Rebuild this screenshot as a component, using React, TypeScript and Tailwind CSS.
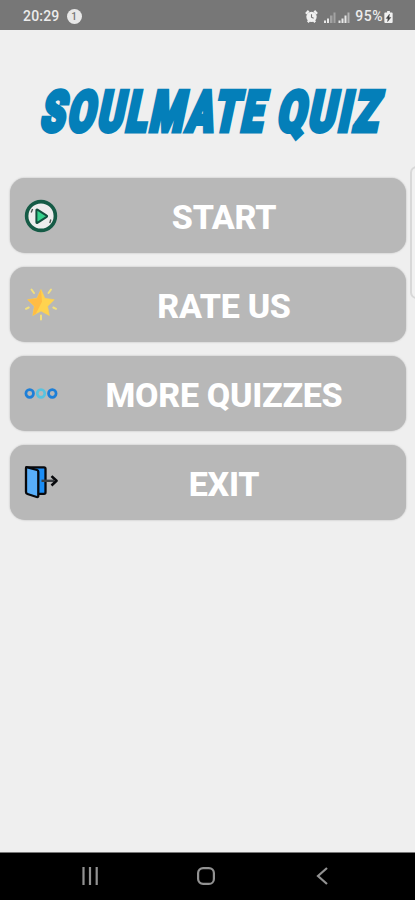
import React from "react";

const PlayIcon: React.FC = () => (
  <svg viewBox="0 0 34 34" className="size-[34px] shrink-0">
    <circle cx="17" cy="17" r="14.4" fill="#ededed" stroke="#155b46" strokeWidth="3.6" />
    <path d="M7.2 13.500l1.400-3.500M26.800 20.500l-1 3.600" stroke="#4b5551" strokeWidth="1.400" fill="none" />
    <path
      d="M12.400 11.300v12c0 .6.5.9 1 .6l9.300-6c.5-.3.5-.9 0-1.200l-9.300-6c-.5-.3-1 0-1 .6z"
      fill="#36d28d"
      stroke="#12503e"
      strokeWidth="2"
      strokeLinejoin="round"
    />
  </svg>
);

const StarIcon: React.FC = () => (
  <svg viewBox="0 2 34 34" className="size-[34px] shrink-0">
    <path
      d="M17 3.500l3.900 8.800 9.300 1.400-6.600 6.500 1.700 9.300-8.300-4.500-8.200 4.500 1.600-9.300-6.700-6.500 9.300-1.400z"
      fill="#ffd34e"
      stroke="#ffd34e"
      strokeWidth=".6"
      strokeLinejoin="round"
    />
    <path d="M17 3.500l-4 8.800-9.300 1.400 6.700 6.500-1.600 9.300 3-1.700 6.200-12z" fill="#ffbc45" />
    <g stroke="#f3e07c" strokeWidth="2" strokeLinecap="round">
      <path d="M7.500 3.500l2.500 3.500M27 3.500l-2.500 3.500M2 22.800l2.700-1.300M32 22.800l-2.700-1.300M17 29.500v4" />
    </g>
  </svg>
);

const DotsIcon: React.FC = () => (
  <svg viewBox="0 0 34 34" className="size-[34px] shrink-0" fill="none" strokeWidth="2.700">
    <circle cx="5.700" cy="16.500" r="3.800" stroke="#1d7fd8" />
    <circle cx="17" cy="16.500" r="3.800" stroke="#58c3df" />
    <circle cx="28.300" cy="16.500" r="3.800" stroke="#1d7fd8" />
  </svg>
);

const ExitIcon: React.FC = () => (
  <svg viewBox="0 .7 34 34" className="size-[34px] shrink-0">
    <g stroke="#08090c" strokeWidth="2.300" strokeLinejoin="round">
      <path d="M2.500 2h17.500q1.500 0 1.500 1.500v23.500q0 1.500-1.500 1.500h-7.500z" fill="#1b8df5" />
      <path d="M2 3q0-1.500 1.500-1l9.500 2.700q1.300.4 1.300 1.800v24q0 1.700-1.600 1.200l-9.200-3q-1.500-.5-1.500-2z" fill="#58aef9" />
    </g>
    <path d="M17.500 15.500H30" stroke="#3d4145" strokeWidth="2.400" />
    <path d="M27.500 10.800l5 4.700-5 4.700" fill="none" stroke="#08090c" strokeWidth="2.600" strokeLinejoin="round" />
  </svg>
);

const menu = [
  { label: "START", icon: <PlayIcon /> },
  { label: "RATE US", icon: <StarIcon /> },
  { label: "MORE QUIZZES", icon: <DotsIcon /> },
  { label: "EXIT", icon: <ExitIcon /> },
];

const StatusBar: React.FC = () => (
  <header className="flex h-[30px] shrink-0 items-center justify-between bg-[#777777] pt-[3px] pr-[22px] pl-[23px] text-[14px] font-medium text-[#ececec]">
    <div className="flex items-center gap-[7px]">
      <span className="tracking-[0.2px]">20:29</span>
      <span className="flex size-[15px] items-center justify-center rounded-full bg-[#e8e8e8] text-[10px] text-[#777777]">
        1
      </span>
    </div>
    <div className="flex items-center">
      <svg viewBox="0 0 14 14" className="mr-[5px] size-[13px]">
        <path d="M1 4l3-3M13 4l-3-3M3 13l1.500-1.500M11 13l-1.500-1.500" stroke="#f0f0f0" strokeWidth="2.500" />
        <circle cx="7" cy="7.400" r="5.600" fill="#f0f0f0" />
        <path d="M7 4.500v3.300l2.300 1" fill="none" stroke="#777777" strokeWidth="1.200" />
      </svg>
      <svg viewBox="0 0 28 12" className="mr-[4px] h-[12px] w-[28px]">
        <path d="M1 9.500h2V12H1zM4 7.500h2V12H4z" fill="#e8e8e8" />
        <path d="M7 4.500h2.500V12H7zM10.500 1.500h2V12h-2z" fill="#a2a2a2" />
        <path d="M15.500 9.500h2V12h-2zM18.500 7.500h2V12h-2zM21.500 4.500h2V12h-2z" fill="#e8e8e8" />
        <path d="M24.500 1.500h2V12h-2z" fill="#b5b5b5" />
      </svg>
      <span className="mr-px tracking-[0.5px]">95%</span>
      <svg viewBox="0 0 9 13" className="h-[12px] w-[9px]">
        <path d="M3 0h3v1.500h2q1 0 1 1V12q0 1-1 1H1q-1 0-1-1V2.500q0-1 1-1h2z" fill="#f0f0f0" />
        <path d="M5.500 3.500L2 8h2l-.5 3.500L7 7H5z" fill="#444444" stroke="#444444" strokeWidth=".5" />
      </svg>
    </div>
  </header>
);

const Title: React.FC = () => (
  <h1 className="mt-[38px] h-[90px] shrink-0">
    <svg
      viewBox="0 0 415 90"
      className="h-[90px] w-[415px] overflow-visible fill-[#047fb9] stroke-[#047fb9] font-['Roboto'] text-[56px] font-black tracking-[4px]"
      strokeWidth="4.800"
    >
      <g transform="translate(0 63) skewX(-12)">
        <text x="39" y="0" textLength="225" lengthAdjust="spacingAndGlyphs">
          SOULMATE
        </text>
        <text x="275.500" y="0" textLength="104" lengthAdjust="spacingAndGlyphs">
          QUIZ
        </text>
      </g>
    </svg>
  </h1>
);

const NavBar: React.FC = () => (
  <nav className="flex h-[48px] shrink-0 items-center justify-between border-t border-[#777777] bg-black pr-[87px] pb-px pl-[81px]">
    <svg viewBox="0 0 18 18" className="size-[18px]" stroke="#929292" strokeWidth="2.200">
      <path d="M2.500 0v18M9 0v18M15.700 0v18" />
    </svg>
    <svg viewBox="0 0 18 18" className="mr-[4px] size-[18px]" fill="none" stroke="#929292" strokeWidth="2.200">
      <rect x="1.100" y="1.100" width="15.800" height="15.800" rx="5" />
    </svg>
    <svg viewBox="0 0 12 18" className="h-[18px] w-[12px]" fill="none" stroke="#929292" strokeWidth="2.200">
      <path d="M11 1L2 9l9 8" />
    </svg>
  </nav>
);

const App: React.FC = () => {
  return (
    <div className="relative flex h-[900px] w-[415px] flex-col overflow-hidden bg-[#efefef] font-['Roboto',sans-serif]">
      <StatusBar />
      <Title />
      <main className="flex flex-1 flex-col gap-[14px] pt-[20px] pr-[9px] pl-[10px]">
        {menu.map((item) => (
          <button
            key={item.label}
            className="flex h-[75px] w-full items-center rounded-[15px] bg-[#b8b8b8] pr-[16px] pl-[14px] shadow-[0_0_2px_#b0b0b0]"
          >
            {item.icon}
            <span className="flex-1 pt-[2px] text-center text-[34px] leading-none font-extrabold tracking-[-0.3px] text-white">
              {item.label}
            </span>
          </button>
        ))}
      </main>
      {/* edge panel handle */}
      <div className="absolute top-[166px] -right-[8px] h-[133px] w-[13px] rounded-[7px] border-2 border-[#d8d8d8] bg-[#f1f1f1]" />
      <NavBar />
    </div>
  );
};

export default App;
